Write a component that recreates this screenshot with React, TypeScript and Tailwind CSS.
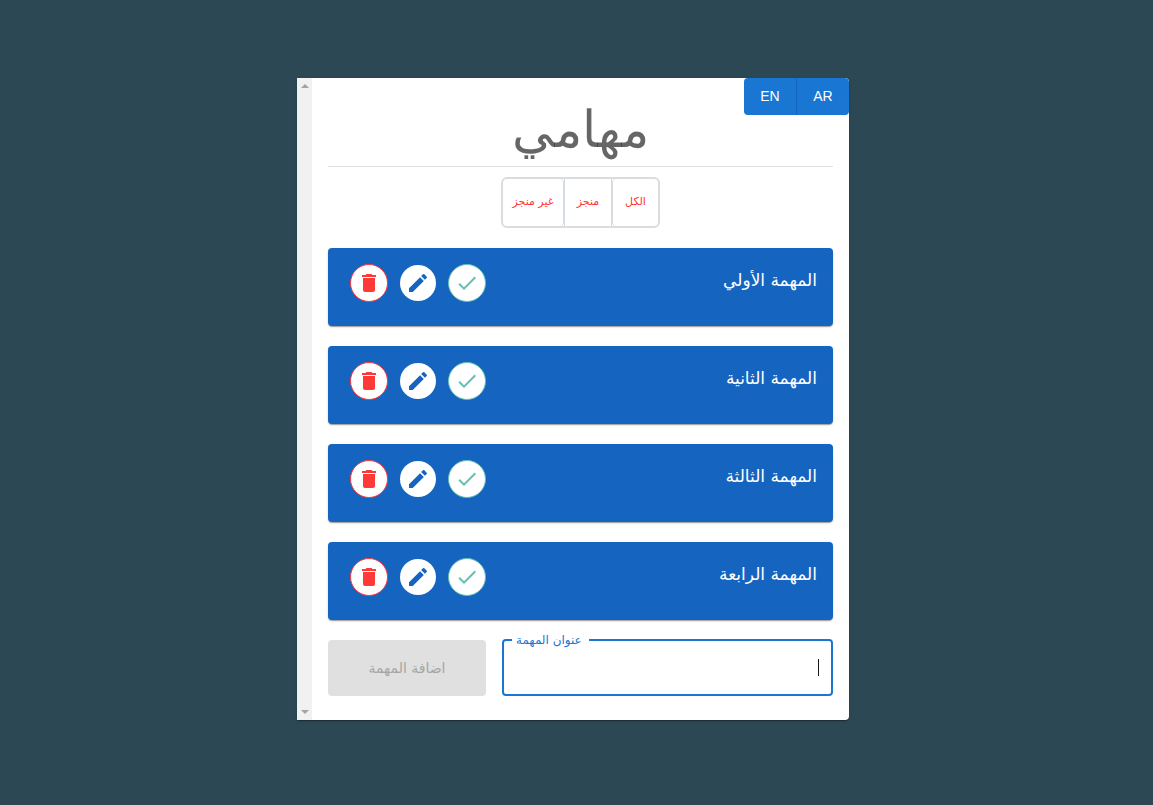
import { useState } from "react";

const initialTasks = ["المهمة الأولي", "المهمة الثانية", "المهمة الثالثة", "المهمة الرابعة"];

function Icon({ d }: { d: string }) {
  return (
    <svg viewBox="0 0 24 24" className="size-6 fill-current" aria-hidden="true">
      <path d={d} />
    </svg>
  );
}

const CHECK = "M9 16.17 4.83 12l-1.42 1.41L9 19 21 7l-1.41-1.41z";
const EDIT =
  "M3 17.25V21h3.75L17.81 9.94l-3.75-3.75L3 17.25zM20.71 7.04c.39-.39.39-1.02 0-1.41l-2.34-2.34a.996.996 0 0 0-1.41 0l-1.83 1.83 3.75 3.75 1.83-1.83z";
const TRASH = "M6 19c0 1.1.9 2 2 2h8c1.1 0 2-.9 2-2V7H6v12zM19 4h-3.5l-1-1h-5l-1 1H5v2h14V4z";

function Task({ title }: { title: string }) {
  return (
    <li className="flex items-start justify-between rounded bg-[#1565c0] pt-4 pr-4 pb-6 pl-[22px] text-white shadow-[0_2px_1px_-1px_rgba(0,0,0,0.2),0_1px_1px_rgba(0,0,0,0.14),0_1px_3px_rgba(0,0,0,0.12)]">
      <h2 className="text-[17px] leading-8">{title}</h2>
      <div className="flex items-center gap-3">
        <button aria-label="إنجاز" className="flex size-[38px] items-center justify-center rounded-full border border-[#66bfb0] bg-white text-[#66bfb0]">
          <Icon d={CHECK} />
        </button>
        <button aria-label="تعديل" className="flex size-9 items-center justify-center rounded-full bg-white text-[#1565c0]">
          <Icon d={EDIT} />
        </button>
        <button aria-label="حذف" className="flex size-[38px] items-center justify-center rounded-full border border-[#ff3838] bg-white text-[#ff3838]">
          <Icon d={TRASH} />
        </button>
      </div>
    </li>
  );
}

export default function App() {
  const [value, setValue] = useState("");
  return (
    <div className="flex min-h-screen items-center justify-center bg-[#2d4855] pr-[7px] pb-[7px] font-['Liberation_Sans','DejaVu_Sans',sans-serif]">
      <main
        dir="rtl"
        className="relative flex w-full max-w-[552px] overflow-hidden rounded-r bg-white shadow-[0_2px_1px_-1px_rgba(0,0,0,0.2),0_1px_1px_rgba(0,0,0,0.14),0_1px_3px_rgba(0,0,0,0.12)]"
      >
        <div dir="ltr" className="absolute top-0 right-0 flex overflow-hidden rounded bg-[#1976d2] text-sm text-white">
          <button className="w-[53px] border-r border-[#1565c0] pt-2 pb-[9px]">EN</button>
          <button className="w-[52px] pt-2 pb-[9px]">AR</button>
        </div>

        <div className="min-w-0 flex-1 px-4 pt-4 pb-6 font-['DejaVu_Sans',sans-serif]">
          <h1 className="h-[72px] text-center text-[51px] leading-[72px] font-extralight text-black/60">مهامي</h1>
          <hr className="border-t border-black/12" />
          <div className="mt-2.5 flex justify-center text-[11px] text-[#ff3333]">
            <div className="flex h-[51px] rounded-md border-2 border-[#dadce0]">
              <button className="w-[46px] rounded border-l border-[#dadce0]">الكل</button>
              <button className="w-[48px] border-x border-[#d3dae3]">منجز</button>
              <button className="w-[61px] rounded border-r border-[#dadce0]">غير منجز</button>
            </div>
          </div>

          <ul className="mt-5 flex flex-col gap-5">
            {initialTasks.map((t) => (
              <Task key={t} title={t} />
            ))}
          </ul>

          <form className="mt-[19px] flex items-end gap-4" onSubmit={(e) => e.preventDefault()}>
            <div className="relative flex flex-1">
              <input
                id="task-title"
                autoFocus
                value={value}
                onChange={(e) => setValue(e.target.value)}
                className="peer h-[57px] w-full rounded border-2 border-[#1976d2] px-3 text-base text-black/85 outline-none"
              />
              <label htmlFor="task-title" className="absolute -top-[7px] left-2.5 bg-white pr-[7px] pl-1 text-xs leading-4 text-[#1976d2]">
                عنوان المهمة
              </label>
              {value === "" && (
                <span className="pointer-events-none absolute top-5 right-3.5 h-[17px] w-px bg-black/90" aria-hidden="true" />
              )}
            </div>
            <button disabled={!value} className="h-14 w-[158px] rounded bg-[#1976d2] text-sm text-white disabled:bg-[#e0e0e0] disabled:text-[#a6a6a6]">
              اضافة المهمة
            </button>
          </form>
        </div>

        <div className="flex w-[15px] flex-col items-center justify-between bg-[#f1f1f1] py-1.5 text-[#a3a3a3]" aria-hidden="true">
          <svg viewBox="0 0 8 4" className="h-1 w-2 fill-current">
            <path d="M0 4 4 0l4 4z" />
          </svg>
          <svg viewBox="0 0 8 4" className="h-1 w-2 fill-current">
            <path d="M0 0h8L4 4z" />
          </svg>
        </div>
      </main>
    </div>
  );
}
